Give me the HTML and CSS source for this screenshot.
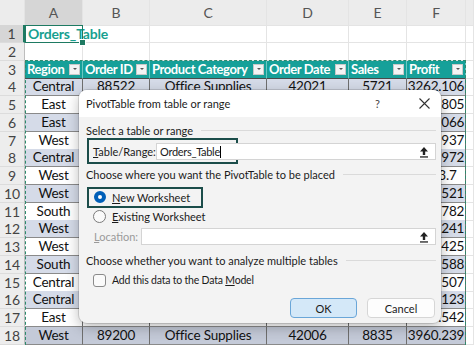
FILE: index.html
```html
<!doctype html>
<html>
<head>
    <link rel="stylesheet" href="styles.css">
</head>
<body>
<div id="sheet">
    <div class="row colhead">
        <div class="corner"></div>
        <div class="sel">A</div><div>B</div><div>C</div><div>D</div><div>E</div><div>F</div><div></div>
    </div>
    <div class="row">
        <div class="rn sel">1</div>
        <div class="title">Orders_Table</div><div></div><div></div><div></div><div></div><div></div><div></div>
    </div>
    <div class="row">
        <div class="rn">2</div>
        <div></div><div></div><div></div><div></div><div></div><div></div><div></div>
    </div>
    <div class="row thead">
        <div class="rn">3</div>
        <div>Region<span class="drop"></span></div>
        <div>Order ID<span class="drop"></span></div>
        <div>Product Category<span class="drop"></span></div>
        <div>Order Date<span class="drop"></span></div>
        <div>Sales<span class="drop"></span></div>
        <div>Profit<span class="drop"></span></div>
        <div class="blank"></div>
    </div>
    <div class="row data band"><div class="rn">4</div><div>Central</div><div>88522</div><div>Office Supplies</div><div>42021</div><div>5721</div><div>3262.106</div><div class="blank"></div></div>
    <div class="row data"><div class="rn">5</div><div>East</div><div>88523</div><div>Furniture</div><div>42022</div><div>3410</div><div>2145.805</div><div class="blank"></div></div>
    <div class="row data band"><div class="rn">6</div><div>East</div><div>88525</div><div>Technology</div><div>42025</div><div>6120</div><div>1337.066</div><div class="blank"></div></div>
    <div class="row data"><div class="rn">7</div><div>West</div><div>88527</div><div>Office Supplies</div><div>42027</div><div>7240</div><div>4318.937</div><div class="blank"></div></div>
    <div class="row data band"><div class="rn">8</div><div>Central</div><div>88530</div><div>Furniture</div><div>42030</div><div>4355</div><div>2256.972</div><div class="blank"></div></div>
    <div class="row data"><div class="rn">9</div><div>West</div><div>88532</div><div>Technology</div><div>42033</div><div>2980</div><div>1523.7</div><div class="blank"></div></div>
    <div class="row data band"><div class="rn">10</div><div>West</div><div>88536</div><div>Office Supplies</div><div>42036</div><div>5102</div><div>3011.521</div><div class="blank"></div></div>
    <div class="row data"><div class="rn">11</div><div>South</div><div>88540</div><div>Furniture</div><div>42040</div><div>3377</div><div>1484.782</div><div class="blank"></div></div>
    <div class="row data band"><div class="rn">12</div><div>West</div><div>88544</div><div>Technology</div><div>42043</div><div>4890</div><div>2679.241</div><div class="blank"></div></div>
    <div class="row data"><div class="rn">13</div><div>West</div><div>88547</div><div>Office Supplies</div><div>42047</div><div>3660</div><div>1902.425</div><div class="blank"></div></div>
    <div class="row data band"><div class="rn">14</div><div>South</div><div>88551</div><div>Furniture</div><div>42051</div><div>6014</div><div>3325.588</div><div class="blank"></div></div>
    <div class="row data"><div class="rn">15</div><div>Central</div><div>88555</div><div>Technology</div><div>42055</div><div>4207</div><div>2211.507</div><div class="blank"></div></div>
    <div class="row data band"><div class="rn">16</div><div>Central</div><div>88558</div><div>Office Supplies</div><div>42058</div><div>7118</div><div>4102.123</div><div class="blank"></div></div>
    <div class="row data"><div class="rn">17</div><div>East</div><div>88561</div><div>Furniture</div><div>42061</div><div>3544</div><div>1876.542</div><div class="blank"></div></div>
    <div class="row data band last"><div class="rn">18</div><div>West</div><div>89200</div><div>Office Supplies</div><div>42006</div><div>8835</div><div>3960.239</div><div class="blank"></div></div>

    <div class="cursor-cell"><span class="handle"></span></div>
    <div class="ants"></div>

    <div class="dialog">
        <div class="dlg-title">
            <span class="dlg-name">PivotTable from table or range</span>
            <span class="help">?</span>
            <svg class="close" width="13" height="13" viewBox="0 0 13 13"><path d="M1.5 1.5L11.5 11.5M11.5 1.5L1.5 11.5" stroke="#333" stroke-width="1.1" fill="none"/></svg>
        </div>
        <div class="dlg-body">
            <div class="group">Select a table or range</div>
            <div class="field first focus-box">
                <span class="lbl"><u>T</u>able/Range:</span>
                <div class="input range"><span>Orders_Table</span><span class="caret"></span>
                    <svg class="pick" width="10" height="12" viewBox="0 0 10 12"><path d="M5 1L1 5.5H3.8V9H6.2V5.5H9Z" fill="#222"/><rect x="1" y="10.3" width="8" height="1.3" fill="#222"/></svg>
                </div>
            </div>
            <div class="group second">Choose where you want the PivotTable to be placed</div>
            <div class="option new focus-box2"><span class="radio on"></span><span><u>N</u>ew Worksheet</span></div>
            <div class="option existing"><span class="radio"></span><span><u>E</u>xisting Worksheet</span></div>
            <div class="field loc">
                <span class="lbl dim"><u>L</u>ocation:</span>
                <div class="input location">
                    <svg class="pick" width="10" height="12" viewBox="0 0 10 12"><path d="M5 1L1 5.5H3.8V9H6.2V5.5H9Z" fill="#222"/><rect x="1" y="10.3" width="8" height="1.3" fill="#222"/></svg>
                </div>
            </div>
            <div class="group third">Choose whether you want to analyze multiple tables</div>
            <div class="option check"><span class="box"></span><span class="check-text">Add this data to the Data <u>M</u>odel</span></div>
            <div class="buttons">
                <button class="btn ok">OK</button>
                <button class="btn">Cancel</button>
            </div>
        </div>
    </div>
</div>
</body>
</html>
```

FILE: styles.css
```css
html, body {
    margin: 0;
    background: #fff;
}
#sheet {
    position: relative;
    width: 474px;
    height: 345px;
    overflow: hidden;
    font-family: Lato, "Liberation Sans", sans-serif;
    font-size: 13.5px;
    letter-spacing: -0.2px;
    color: #111;
}
.row {
    display: grid;
    grid-template-columns: 25px 58px 67px 117px 82px 58px 59px 8px;
    height: 17.75px;
}
.row > div {
    box-sizing: border-box;
    white-space: nowrap;
    overflow: visible;
    line-height: 17px;
}
.colhead {
    height: 25px;
    background: #ececec;
    color: #555;
    font-size: 14px;
}
.colhead > div {
    line-height: 25px;
    text-align: center;
    border-right: 1px solid #d0d0d0;
    border-bottom: 1px solid #bdbdbd;
}
.colhead .sel {
    background: #d6d6d6;
    border-bottom: 2px solid #1e7a62;
}
.rn {
    background: #ededed;
    color: #444;
    text-align: center;
    font-size: 14px;
    border-right: 1px solid #bdbdbd;
    border-bottom: 1px solid #dcdcdc;
}
.rn.sel {
    background: #d6d6d6;
    border-right: 2px solid #1e7a62;
}
.row > div:not(.rn) {
    border-right: 1px solid #e4e4e4;
    border-bottom: 1px solid #e4e4e4;
}
.title {
    color: #17a090;
    font-weight: bold;
    font-size: 14px;
    padding-left: 3px;
    position: relative;
    z-index: 1;
}
.thead > div:not(.rn):not(.blank) {
    background: #16a099;
    color: #fff;
    font-weight: bold;
    font-size: 13px;
    letter-spacing: -0.4px;
    padding-left: 2px;
    position: relative;
    border-right: 1px solid #6cc7c2;
    border-bottom: 1px solid #4a4a4a;
}
.drop {
    position: absolute;
    right: 2px;
    top: 3px;
    width: 11px;
    height: 11px;
    background: #f4f4f4;
    border: 1px solid #c9c9c9;
    box-sizing: border-box;
}
.drop:after {
    content: '';
    position: absolute;
    left: 2.5px;
    top: 3.5px;
    border-left: 2.5px solid transparent;
    border-right: 2.5px solid transparent;
    border-top: 2.5px solid #555;
}
.data > div:not(.rn):not(.blank) {
    text-align: center;
    border-right: 1px solid #6f6f6f;
    border-bottom: 1px solid #8a8a8a;
}
.band > div:not(.rn):not(.blank) {
    background: #d5dbe8;
}
.last > div:not(.rn):not(.blank) {
    background: #c4cad8;
}
.cursor-cell {
    position: absolute;
    left: 25px;
    top: 25px;
    width: 58px;
    height: 18px;
    border: 1.5px solid #1e7a62;
    box-sizing: border-box;
    z-index: 2;
}
.handle {
    position: absolute;
    right: -4px;
    bottom: -4px;
    width: 5px;
    height: 5px;
    background: #1e7a62;
    border: 1px solid #fff;
}
.ants {
    position: absolute;
    left: 25px;
    top: 60px;
    width: 441px;
    height: 290px;
    border: 1.5px dashed #2e8a6c;
    box-sizing: border-box;
    z-index: 2;
}

/* dialog */
.dialog {
    position: absolute;
    left: 79px;
    top: 90px;
    width: 362px;
    height: 233px;
    background: #f3f3f3;
    border-radius: 8px;
    box-shadow: 0 0 0 1px rgba(0,0,0,0.12), 0 4px 14px rgba(0,0,0,0.28);
    font-family: Lato, "Open Sans", sans-serif;
    font-size: 11px;
    letter-spacing: 0;
    color: #1b1b1b;
    z-index: 5;
    overflow: hidden;
}
.dlg-title {
    height: 27px;
    background: #fff;
    display: flex;
    align-items: center;
    padding-left: 7px;
    padding-right: 10px;
}
.dlg-name {
    font-size: 11px;
    flex: 1;
}
.help {
    font-size: 11px;
    color: #444;
    margin-right: 38px;
}
.dlg-body {
    padding: 0 5px 0 7px;
}
.group {
    display: flex;
    align-items: center;
    height: 14px;
    margin-top: 6px;
}
.group:after {
    content: '';
    flex: 1;
    border-top: 1px solid #dadada;
    margin-left: 8px;
}
.group.second {
    margin-top: 7px;
}
.group.third {
    margin-top: 8px;
}
.field {
    display: flex;
    align-items: center;
    height: 17px;
    position: relative;
}
.field.first {
    margin-top: 6px;
}
.field .lbl {
    padding-left: 7px;
    width: 63px;
}
.field.loc {
    margin-top: 4px;
}
.field.loc .lbl {
    padding-left: 8px;
    width: 47px;
}
.lbl.dim {
    color: #9a9a9a;
}
.input {
    flex: 1;
    height: 17px;
    box-sizing: border-box;
    background: #fff;
    border: 1px solid #d4d4d4;
    display: flex;
    align-items: center;
    padding-left: 3px;
    position: relative;
}
.range span:first-child {
    letter-spacing: -0.3px;
}
.caret {
    display: inline-block;
    width: 1px;
    height: 12px;
    background: #000;
}
.pick {
    position: absolute;
    right: 6px;
    top: 2px;
}
.focus-box:before, .focus-box2:before {
    content: '';
    position: absolute;
    border: 2px solid #1b4d4a;
    box-sizing: border-box;
}
.focus-box:before {
    left: 1px;
    top: -5px;
    width: 151px;
    height: 26px;
}
.focus-box2:before {
    left: 1px;
    top: -2px;
    width: 116px;
    height: 21px;
}
.option {
    display: flex;
    align-items: center;
    height: 16px;
    position: relative;
}
.option.new {
    margin-top: 8px;
}
.option.existing {
    margin-top: 3px;
}
.option.check {
    margin-top: 5px;
}
.radio {
    width: 13px;
    height: 13px;
    box-sizing: border-box;
    border-radius: 50%;
    border: 1px solid #7a7a7a;
    background: #fafafa;
    margin-left: 7px;
    margin-right: 6px;
}
.radio.on {
    width: 12px;
    height: 12px;
    border: 4px solid #005fb8;
    background: #fff;
    margin-left: 8px;
    margin-right: 6px;
}
.box {
    width: 13px;
    height: 13px;
    box-sizing: border-box;
    border: 1px solid #8a8a8a;
    border-radius: 3px;
    background: #fafafa;
    margin-left: 7px;
    margin-right: 6px;
}
.check-text {
    font-size: 10.5px;
    letter-spacing: -0.2px;
}
.buttons {
    display: flex;
    justify-content: flex-end;
    gap: 10px;
    margin-top: 10px;
    padding-right: 1px;
}
.btn {
    width: 68px;
    height: 20px;
    box-sizing: border-box;
    font-family: Lato, "Open Sans", sans-serif;
    font-size: 11px;
    color: #1b1b1b;
    background: #fdfdfd;
    border: 1px solid #d6d6d6;
    border-radius: 4px;
    padding: 0;
}
.btn.ok {
    width: 67px;
    background: #d4e8f8;
    border: 1px solid #6aa6d8;
}
```
